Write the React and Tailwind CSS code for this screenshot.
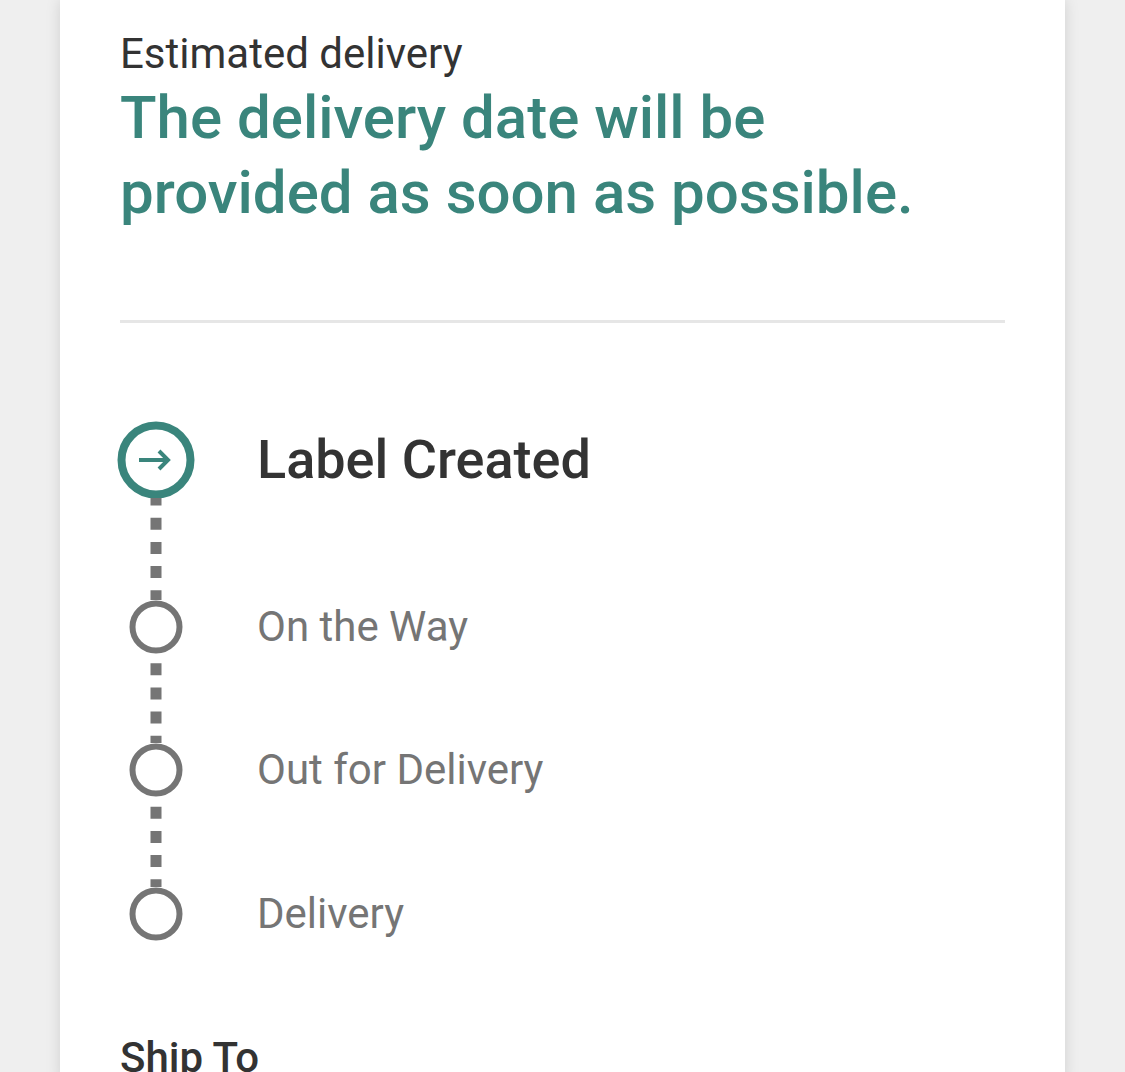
import React from "react";

function BigCircle() {
  return (
    <svg width="80" height="80" viewBox="0 0 80 80" className="shrink-0">
      <circle cx="40" cy="40" r="34.5" fill="white" stroke="#3a857c" strokeWidth="8" />
      <line x1="23" y1="40" x2="51" y2="40" stroke="#3a857c" strokeWidth="4" />
      <polyline points="43,31 52,40 43,49" fill="none" stroke="#3a857c" strokeWidth="4" strokeLinejoin="miter" />
    </svg>
  );
}

function SmallCircle() {
  return (
    <svg width="54" height="54" viewBox="0 0 54 54" className="shrink-0">
      <circle cx="27" cy="27" r="23.5" fill="white" stroke="#757575" strokeWidth="6" />
    </svg>
  );
}

function Connector({ h, offset }) {
  return (
    <div className="flex w-[72px] justify-center">
      <svg width="12" height={h} viewBox={`0 0 12 ${h}`} className="block">
        <line x1="6" y1="0" x2="6" y2={h} stroke="#757575" strokeWidth="11" strokeDasharray="12 12.2" strokeDashoffset={offset} />
      </svg>
    </div>
  );
}

export default function App() {
  const font = { fontFamily: "Roboto, 'Noto Sans', Arial, sans-serif" };
  return (
    <div className="min-h-screen bg-[#efefef]" style={font}>
      <div className="mx-[60px] min-h-[1072px] bg-white px-[60px] pt-[30px] shadow-[0_0_14px_rgba(0,0,0,0.13)]">
        <div className="text-[42px] leading-[48px] text-[#333333]">Estimated delivery</div>
        <div className="mt-[2px] text-[60px] font-medium leading-[75px] text-[#3a857c]">
          The delivery date will be
          <br />
          provided as soon as possible.
        </div>
        <div className="mt-[90px] h-[3px] bg-[#e6e6e6]" />

        <div className="mt-[98px] flex flex-col">
          <div className="flex h-[77px] items-center">
            <div className="flex w-[72px] justify-center">
              <BigCircle />
            </div>
            <div className="pl-[65px] text-[54px] font-medium leading-none text-[#333333]">Label Created</div>
          </div>
          <Connector h={102} offset={4.5} />
          <div className="flex h-[53px] items-center">
            <div className="flex w-[72px] justify-center">
              <SmallCircle />
            </div>
            <div className="pl-[65px] text-[42px] leading-none text-[#757575]">On the Way</div>
          </div>
          <Connector h={90} offset={14} />
          <div className="flex h-[53px] items-center">
            <div className="flex w-[72px] justify-center">
              <SmallCircle />
            </div>
            <div className="pl-[65px] text-[42px] leading-none text-[#757575]">Out for Delivery</div>
          </div>
          <Connector h={91} offset={13.5} />
          <div className="flex h-[53px] items-center">
            <div className="flex w-[72px] justify-center">
              <SmallCircle />
            </div>
            <div className="pl-[65px] text-[42px] leading-none text-[#757575]">Delivery</div>
          </div>
        </div>

        <div className="mt-[94px] text-[42px] font-medium leading-[48px] text-[#333333]">Ship To</div>
      </div>
    </div>
  );
}
